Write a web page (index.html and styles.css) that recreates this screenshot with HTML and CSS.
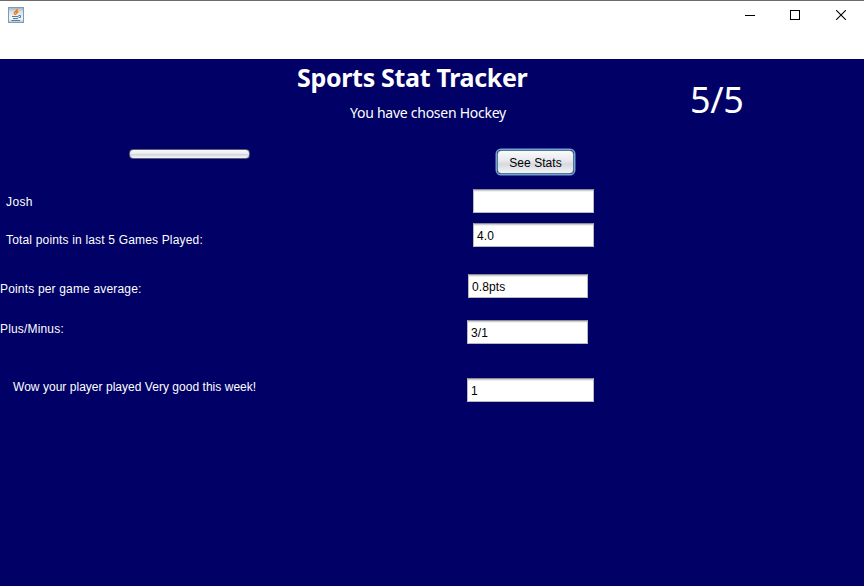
FILE: index.html
```
<!DOCTYPE html>
<html lang="en">
<head>
<meta charset="utf-8">
<title>Sports Stat Tracker</title>
<link rel="stylesheet" href="styles.css">
</head>
<body>
<div class="window">
  <header class="titlebar">
    <svg class="app-icon" width="16" height="16" viewBox="0 0 16 16">
      <defs><linearGradient id="tile" x1="0" y1="0" x2="0" y2="1"><stop offset="0" stop-color="#9db3c4"/><stop offset=".3" stop-color="#dce5ec"/><stop offset=".75" stop-color="#f4f6f8"/><stop offset="1" stop-color="#b5c6d3"/></linearGradient></defs>
      <rect x=".5" y=".5" width="15" height="15" fill="url(#tile)" stroke="#7f9cb3"/>
      <path d="M9.300 2C9.500 4 6 4.700 6.400 6.300C6.600 7.200 7.600 7.300 7.700 8M10.500 4.500C8.500 5.300 8.100 6 8.900 6.800" fill="none" stroke="#f07808" stroke-width="1.500"/>
      <path d="M4 9.500H10.500M5 11.500H10M3.500 13.500H12M10.500 8.500H12.500V10.500H10.500" fill="none" stroke="#4f7da1" stroke-width="1"/>
    </svg>
    <div class="controls">
      <svg width="10" height="10" viewBox="0 0 10 10" shape-rendering="crispEdges"><path d="M0 5.500H10" stroke="#000"/></svg>
      <svg width="10" height="10" viewBox="0 0 10 10" shape-rendering="crispEdges"><rect x=".5" y=".5" width="9" height="9" fill="none" stroke="#000"/></svg>
      <svg width="10" height="10" viewBox="0 0 10 10"><path d="M0 0L10 10M10 0L0 10" stroke="#000" stroke-width="1.100"/></svg>
    </div>
  </header>
  <main class="panel">
    <section class="hero">
      <div class="heading">
        <h1>Sports Stat Tracker</h1>
        <p>You have chosen Hockey</p>
      </div>
      <div class="count">5/5</div>
    </section>
    <section class="actions">
      <div class="progress"></div>
      <button class="stats-button" type="button">See Stats</button>
    </section>
    <section class="stats">
      <div class="row row-name"><label>Josh</label><input type="text"></div>
      <div class="row row-total"><label>Total points in last 5 Games Played:</label><input type="text" value="4.0"></div>
      <div class="row row-average"><label>Points per game average:</label><input type="text" value="0.8pts"></div>
      <div class="row row-plus"><label>Plus/Minus:</label><input type="text" value="3/1"></div>
      <div class="row row-verdict"><label>Wow your player played Very good this week!</label><input type="text" value="1"></div>
    </section>
  </main>
</div>
</body>
</html>
```
FILE: styles.css
```
* { box-sizing: border-box; }
body {
  margin: 0;
  font: 12px/14px "Liberation Sans", Arial, sans-serif;
}
.window {
  width: 864px;
  height: 586px;
  display: flex;
  flex-direction: column;
  background: #fff;
  border-top: 1px solid #6b6b6b;
}
.titlebar {
  height: 58px;
  display: flex;
  justify-content: space-between;
  align-items: flex-start;
  padding: 6px 18px 0 8px;
}
.controls { display: flex; gap: 35px; padding-top: 3px; }
.controls svg:last-child { margin-left: 1px; }
.panel { flex: 1; background: #000066; color: #fff; }
.hero {
  display: flex;
  height: 90px;
  font-family: "Noto Sans", Tahoma, sans-serif;
}
.heading { width: 393px; margin-left: 297px; }
h1 {
  margin: 0;
  padding-top: 3px;
  font-size: 25px;
  line-height: 30px;
  font-weight: 700;
  letter-spacing: -0.32px;
  white-space: nowrap;
}
.heading p {
  margin: 11px 0 0 53px;
  font-size: 14px;
  line-height: 20px;
  letter-spacing: -0.26px;
  white-space: nowrap;
}
.count { font-size: 36px; line-height: 44px; padding-top: 19px; letter-spacing: -0.4px; }
.actions {
  display: flex;
  align-items: flex-start;
  height: 40px;
  padding-left: 129px;
}
.progress {
  width: 121px;
  height: 10px;
  border: 1px solid #5b5d78;
  border-radius: 4px;
  background: linear-gradient(#fafafc, #e9ebef 45%, #d2d5dc 55%, #f5f7fa);
}
.stats-button {
  width: 77px;
  height: 24px;
  margin: 1px 0 0 247px;
  padding: 1px 0 0;
  border: 1px solid #5a7590;
  border-radius: 4px;
  box-shadow: 0 0 0 1.500px #73a4d1;
  background: linear-gradient(#fafafc, #e6e8ec 45%, #d6d9df 60%, #f2f4f7);
  font: inherit;
  letter-spacing: 0.05px;
  color: #000;
}
.row { display: flex; height: 24px; }
.row label {
  width: 473px;
  padding: 6px 0 0 6px;
  letter-spacing: 0.17px;
  white-space: nowrap;
}
.row input {
  width: 121px;
  height: 24px;
  padding: 1px 3px 0;
  border: 1px solid #b8b8bd;
  border-top-color: #8d8e92;
  border-radius: 0;
  box-shadow: inset 0 1px 0 #cfd0d2, inset 0 2px 0 #f0f0f1;
  background: #fff;
  font: inherit;
  letter-spacing: 0.1px;
  color: #000;
}
.row-name label { letter-spacing: 0.4px; }
.row-total { margin-top: 10px; }
.row-total label { padding-top: 10px; }
.row-average { margin-top: 27px; }
.row-average label { width: 468px; padding: 8px 0 0; }
.row-average input { width: 120px; }
.row-plus { margin-top: 22px; }
.row-plus label { width: 467px; padding: 2px 0 0; }
.row-verdict { margin-top: 34px; }
.row-verdict label { width: 467px; padding: 2px 0 0 13px; letter-spacing: 0.03px; }
.row-verdict input { width: 127px; }
```
